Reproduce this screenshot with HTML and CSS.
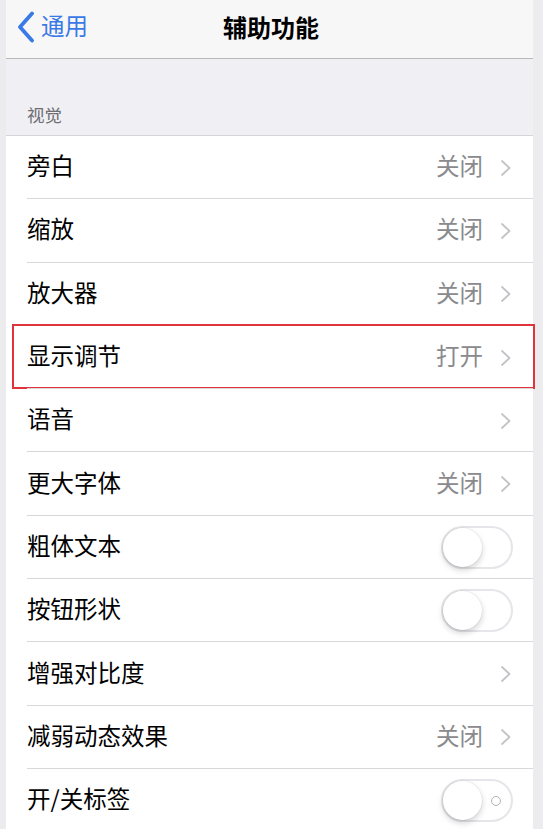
FILE: index.html
```html
<!DOCTYPE html>
<html lang="zh-CN">
<head>
<meta charset="utf-8">
<title>辅助功能</title>
<link rel="stylesheet" href="styles.css">
</head>
<body>
<div class="frame">
  <div class="screen">
    <header class="nav">
      <a class="back">
        <svg class="back-icon" viewBox="0 0 18 32" width="18" height="32"><path d="M15 2.5 L3 16 L15 29.5" fill="none" stroke="#3a7ae6" stroke-width="3.8" stroke-linecap="round" stroke-linejoin="round"/></svg>
        <span>通用</span>
      </a>
      <h1 class="title">辅助功能</h1>
    </header>
    <div class="section-header">视觉</div>
    <ul class="list">
      <li class="row"><span class="label">旁白</span><span class="value">关闭</span><span class="chev"><svg viewBox="0 0 12 18" width="12" height="18"><path d="M2 2 L9.5 9 L2 16" fill="none" stroke="#c4c4c8" stroke-width="1.8" stroke-linecap="round" stroke-linejoin="round"/></svg></span></li>
      <li class="row"><span class="label">缩放</span><span class="value">关闭</span><span class="chev"><svg viewBox="0 0 12 18" width="12" height="18"><path d="M2 2 L9.5 9 L2 16" fill="none" stroke="#c4c4c8" stroke-width="1.8" stroke-linecap="round" stroke-linejoin="round"/></svg></span></li>
      <li class="row"><span class="label">放大器</span><span class="value">关闭</span><span class="chev"><svg viewBox="0 0 12 18" width="12" height="18"><path d="M2 2 L9.5 9 L2 16" fill="none" stroke="#c4c4c8" stroke-width="1.8" stroke-linecap="round" stroke-linejoin="round"/></svg></span></li>
      <li class="row highlighted"><span class="label">显示调节</span><span class="value">打开</span><span class="chev"><svg viewBox="0 0 12 18" width="12" height="18"><path d="M2 2 L9.5 9 L2 16" fill="none" stroke="#c4c4c8" stroke-width="1.8" stroke-linecap="round" stroke-linejoin="round"/></svg></span><span class="mark"></span></li>
      <li class="row"><span class="label">语音</span><span class="chev"><svg viewBox="0 0 12 18" width="12" height="18"><path d="M2 2 L9.5 9 L2 16" fill="none" stroke="#c4c4c8" stroke-width="1.8" stroke-linecap="round" stroke-linejoin="round"/></svg></span></li>
      <li class="row"><span class="label">更大字体</span><span class="value">关闭</span><span class="chev"><svg viewBox="0 0 12 18" width="12" height="18"><path d="M2 2 L9.5 9 L2 16" fill="none" stroke="#c4c4c8" stroke-width="1.8" stroke-linecap="round" stroke-linejoin="round"/></svg></span></li>
      <li class="row"><span class="label">粗体文本</span><span class="toggle"><span class="knob"></span></span></li>
      <li class="row"><span class="label">按钮形状</span><span class="toggle"><span class="knob"></span></span></li>
      <li class="row"><span class="label">增强对比度</span><span class="chev"><svg viewBox="0 0 12 18" width="12" height="18"><path d="M2 2 L9.5 9 L2 16" fill="none" stroke="#c4c4c8" stroke-width="1.8" stroke-linecap="round" stroke-linejoin="round"/></svg></span></li>
      <li class="row"><span class="label">减弱动态效果</span><span class="value">关闭</span><span class="chev"><svg viewBox="0 0 12 18" width="12" height="18"><path d="M2 2 L9.5 9 L2 16" fill="none" stroke="#c4c4c8" stroke-width="1.8" stroke-linecap="round" stroke-linejoin="round"/></svg></span></li>
      <li class="row"><span class="label">开/关标签</span><span class="toggle labeled"><span class="knob"></span><span class="off-label"></span></span></li>
    </ul>
  </div>
</div>
</body>
</html>
```
FILE: styles.css
```css
* { box-sizing: border-box; }
html, body { margin: 0; padding: 0; }
body {
  background: #ececee;
  font-family: "Noto Sans CJK SC", "Noto Sans", sans-serif;
  overflow: hidden;
  height: 829px;
}
.frame {
  padding: 0 10px 0 6px;
  height: 829px;
}
.screen {
  background: #efeff4;
  height: 100%;
}
.nav {
  height: 59px;
  background: #f7f7f8;
  border-bottom: 1px solid #b8b8bc;
  position: relative;
  display: flex;
  align-items: center;
  justify-content: center;
  padding-bottom: 6px;
}
.back {
  position: absolute;
  left: 11px;
  top: 11px;
  display: flex;
  align-items: center;
  color: #3a7ae6;
  font-size: 23.5px;
  line-height: 32px;
}
.back-icon { display: block; margin-right: 6px; }
.back span { position: relative; top: -2px; }
.title {
  margin: 0 0 0 3px;
  font-size: 24px;
  font-weight: 700;
  color: #000;
}
.section-header {
  height: 77px;
  display: flex;
  align-items: flex-end;
  padding: 0 0 8px 21px;
  font-size: 17.5px;
  color: #6d6d72;
  border-bottom: 1px solid #d6d6da;
}
.list {
  list-style: none;
  margin: 0;
  padding: 0;
  background: #fff;
}
.row {
  position: relative;
  height: 63.3px;
  display: flex;
  align-items: center;
  padding: 0 21px 5px 21px;
}
.row::after {
  content: "";
  position: absolute;
  left: 21px;
  right: 0;
  bottom: 0;
  height: 1px;
  background: #d8d8dc;
}
.label {
  flex: 1;
  font-size: 23.5px;
  color: #000;
}
.value {
  font-size: 23.5px;
  color: #8a8a8e;
  margin-right: 17px;
}
.chev { display: flex; align-items: center; margin-top: 5px; }
.chev svg { display: block; }
.mark {
  position: absolute;
  left: 6px;
  right: -2px;
  top: -2px;
  bottom: 0;
  border: 2px solid #e0333b;
  pointer-events: none;
}
.toggle {
  position: relative;
  width: 72px;
  height: 43px;
  border-radius: 22px;
  border: 2px solid #e6e6ea;
  background: #fff;
  margin-right: -1px;
  margin-top: 5px;
}
.knob {
  position: absolute;
  left: 0;
  top: 0;
  width: 39px;
  height: 39px;
  border-radius: 50%;
  background: #fff;
  box-shadow: 0 3px 6px rgba(0,0,0,0.18), 0 0 0 0.5px rgba(0,0,0,0.08);
}
.off-label {
  position: absolute;
  right: 10px;
  top: 15px;
  width: 10px;
  height: 10px;
  border-radius: 50%;
  border: 1.5px solid #b3b3b7;
}
```
